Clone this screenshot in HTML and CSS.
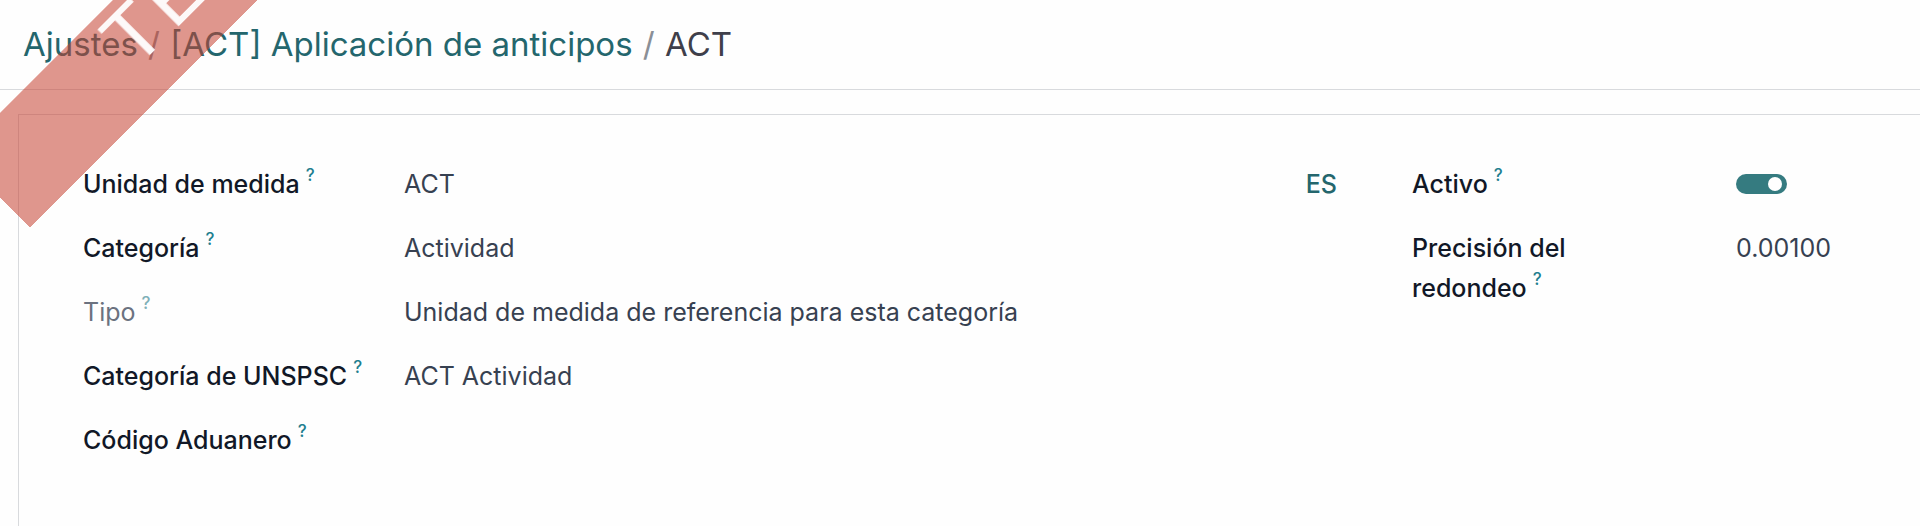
FILE: index.html
```html
<!DOCTYPE html>
<html lang="es">

<head>
    <meta charset="UTF-8">
    <meta name="viewport" content="width=device-width, initial-scale=1.0">
    <title>ACT - Unidad de medida</title>
    <link rel="stylesheet" href="styles.css">
</head>

<body>
    <div class="ribbon">TEST</div>

    <header class="control-panel">
        <nav class="breadcrumb">
            <a href="#">Ajustes</a>
            <span class="sep">/</span>
            <a href="#">[ACT] Aplicación de anticipos</a>
            <span class="sep">/</span>
            <span class="current">ACT</span>
        </nav>
    </header>

    <main class="sheet">
        <div class="group group-main">
            <div class="field">
                <label class="label">Unidad de medida<sup class="help">?</sup></label>
                <div class="value value-name">
                    <span>ACT</span>
                    <span class="lang">ES</span>
                </div>
            </div>
            <div class="field">
                <label class="label">Categoría<sup class="help">?</sup></label>
                <div class="value">Actividad</div>
            </div>
            <div class="field">
                <label class="label muted">Tipo<sup class="help">?</sup></label>
                <div class="value">Unidad de medida de referencia para esta categoría</div>
            </div>
            <div class="field">
                <label class="label">Categoría de UNSPSC<sup class="help">?</sup></label>
                <div class="value">ACT Actividad</div>
            </div>
            <div class="field">
                <label class="label">Código Aduanero<sup class="help">?</sup></label>
                <div class="value"></div>
            </div>
        </div>

        <div class="group group-side">
            <div class="field">
                <label class="label">Activo<sup class="help">?</sup></label>
                <div class="value">
                    <span class="switch"><span class="knob"></span></span>
                </div>
            </div>
            <div class="field">
                <label class="label">Precisión del redondeo<sup class="help">?</sup></label>
                <div class="value">0.00100</div>
            </div>
        </div>
    </main>
</body>

</html>
```

FILE: styles.css
```css
* {
    padding: 0;
    margin: 0;
    box-sizing: border-box;
}

body {
    background-color: #fefefe;
    font-family: Inter, Roboto, "Liberation Sans", Arial, sans-serif;
    font-size: 25px;
    color: #374151;
    overflow: hidden;
    height: 526px;
}

a {
    color: inherit;
    text-decoration: none;
}

/* top bar */
.control-panel {
    height: 90px;
    padding: 24px 0 0 23px;
    border-bottom: 1px solid #d8dadd;
}

.breadcrumb {
    font-size: 33px;
    line-height: 40px;
    color: #24666d;
    white-space: nowrap;
}

.breadcrumb .sep {
    color: #8a8f96;
    margin: 0 1px;
}

.breadcrumb .current {
    color: #3f3f4a;
}

/* form sheet */
.sheet {
    margin: 24px 0 0 18px;
    border-top: 1px solid #d8dadd;
    border-left: 1px solid #d8dadd;
    background-color: #fefefe;
    height: 420px;
    padding: 49px 0 0 64px;
    display: flex;
    gap: 75px;
}

.group {
    display: flex;
    flex-direction: column;
    gap: 24px;
}

.group-main {
    width: 1254px;
}

.group-side {
    flex: 1;
}

.field {
    display: grid;
    line-height: 40px;
}

.group-main .field {
    grid-template-columns: 321px 1fr;
}

.group-side .field {
    grid-template-columns: 324px 1fr;
}

.label {
    color: #111827;
    font-weight: 500;
}

.label.muted {
    color: #6b7280;
    font-weight: 400;
}

.help {
    font-size: 17px;
    font-weight: 500;
    color: #1f7f8f;
    margin-left: 6px;
    vertical-align: 12px;
    line-height: 0;
}

.label.muted .help {
    color: #7fb0b8;
}

.group-side .label {
    padding-right: 100px;
}

.value-name {
    display: flex;
    justify-content: space-between;
}

.lang {
    color: #24666d;
    font-weight: 500;
}

.switch {
    display: inline-flex;
    align-items: center;
    justify-content: flex-end;
    width: 51px;
    height: 20px;
    margin-top: 10px;
    padding-right: 5px;
    border-radius: 10px;
    background-color: #357b80;
    vertical-align: top;
}

.knob {
    width: 14px;
    height: 14px;
    border-radius: 50%;
    background-color: #ffffff;
}

/* environment ribbon */
.ribbon {
    position: fixed;
    left: -94px;
    top: -72px;
    width: 600px;
    height: 102px;
    transform: rotate(-45deg);
    transform-origin: 300px 51px;
    background-color: rgba(196, 64, 48, 0.55);
    color: rgba(255, 255, 255, 0.95);
    font-family: "Liberation Sans", Arial, sans-serif;
    font-size: 80px;
    line-height: 76px;
    letter-spacing: 6px;
    text-align: center;
    z-index: 10;
    pointer-events: none;
}
```
